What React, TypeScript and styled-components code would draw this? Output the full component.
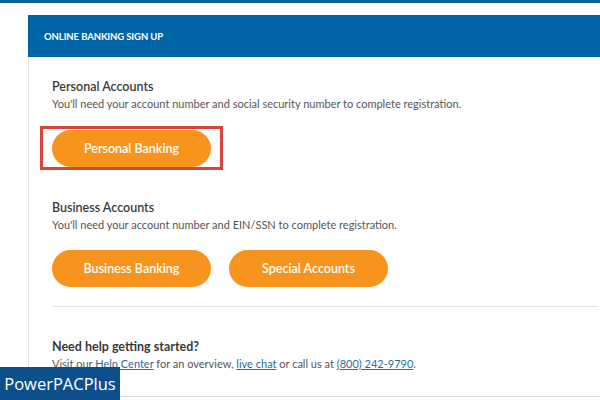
import React from 'react';
import styled, { createGlobalStyle } from 'styled-components';

const GlobalStyle = createGlobalStyle`
  html, body {
    margin: 0;
    padding: 0;
    background: #ffffff;
    overflow: hidden;
  }
  body {
    font-family: Lato, "Open Sans", Arial, sans-serif;
    color: #444;
  }
`;

const Page = styled.div`
  position: relative;
  width: 600px;
  height: 400px;
  overflow: hidden;
`;

const TopBar = styled.div`
  height: 3px;
  background: #0b5d9a;
`;

const Card = styled.div`
  margin: 12px 0 0 28px;
  width: 572px;
  border-left: 1px solid #e2e2e2;
  border-bottom: 1px solid #dcdcdc;
`;

const CardHeader = styled.div`
  height: 42px;
  display: flex;
  align-items: center;
  padding-left: 16px;
  margin-left: -1px;
  background: #0065a6;
  color: #fff;
  font-size: 9.5px;
  font-weight: 700;
  letter-spacing: -0.1px;
  text-transform: uppercase;
`;

const CardBody = styled.div`
  display: flex;
  flex-direction: column;
  padding: 22px 3px 24px 23px;
`;

const Section = styled.section<{ $gap?: number }>`
  display: flex;
  flex-direction: column;
  margin-top: ${(p) => p.$gap ?? 0}px;
`;

const Title = styled.h3<{ $strong?: boolean }>`
  margin: 0;
  font-size: 12.5px;
  line-height: 16px;
  font-weight: ${(p) => (p.$strong ? 700 : 600)};
  color: #3a3a3a;
`;

const Desc = styled.p`
  margin: 0;
  padding-top: 1px;
  font-size: 11px;
  line-height: 16px;
  color: #555;
`;

const Highlight = styled.div`
  align-self: flex-start;
  margin: 14px 0 0 -12px;
  padding: 1px 9px 0;
  border: 3px solid #d9453c;
  display: flex;
`;

const ButtonRow = styled.div`
  display: flex;
  gap: 18px;
  margin-top: 17px;
`;

const OrangeButton = styled.button`
  width: 159px;
  height: 37px;
  border: none;
  border-radius: 19px;
  background: #f7941d;
  color: #fff;
  font-family: Lato, "Open Sans", Arial, sans-serif;
  font-size: 12.5px;
  font-weight: 600;
  cursor: pointer;
`;

const Divider = styled.hr`
  margin: 19px 0 0;
  border: none;
  border-top: 1px solid #e3e3e3;
`;

const Link = styled.a`
  color: #2a6d9c;
  text-decoration: underline;
`;

const Badge = styled.div`
  position: absolute;
  left: 0;
  bottom: 0;
  width: 120px;
  height: 33px;
  display: flex;
  align-items: center;
  justify-content: center;
  background: #0d4f8b;
  color: #fff;
  font-family: "Open Sans", Arial, sans-serif;
  font-size: 16.5px;
`;

const App: React.FC = () => {
  return (
    <Page>
      <GlobalStyle />
      <TopBar />
      <Card>
        <CardHeader>Online Banking Sign Up</CardHeader>
        <CardBody>
          <Section>
            <Title>Personal Accounts</Title>
            <Desc>
              You'll need your account number and social security number to complete registration.
            </Desc>
            <Highlight>
              <OrangeButton>Personal Banking</OrangeButton>
            </Highlight>
          </Section>
          <Section $gap={30}>
            <Title>Business Accounts</Title>
            <Desc>You'll need your account number and EIN/SSN to complete registration.</Desc>
            <ButtonRow>
              <OrangeButton>Business Banking</OrangeButton>
              <OrangeButton>Special Accounts</OrangeButton>
            </ButtonRow>
          </Section>
          <Divider />
          <Section $gap={32}>
            <Title $strong>Need help getting started?</Title>
            <Desc>
              Visit our <Link href="#">Help Center</Link> for an overview, <Link href="#">live chat</Link> or
              call us at <Link href="#">(800) 242-9790</Link>.
            </Desc>
          </Section>
        </CardBody>
      </Card>
      <Badge>PowerPACPlus</Badge>
    </Page>
  );
};

export default App;
